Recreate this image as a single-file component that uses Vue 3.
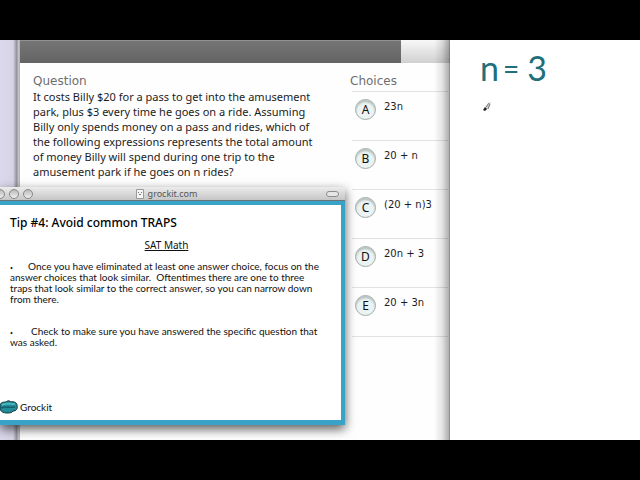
<script setup>
const choices = [
  { letter: 'A', text: '23n' },
  { letter: 'B', text: '20 + n' },
  { letter: 'C', text: '(20 + n)3' },
  { letter: 'D', text: '20n + 3' },
  { letter: 'E', text: '20 + 3n' },
]
</script>

<template>
  <div class="screen">
    <main class="stage">
      <section class="quiz">
        <div class="toolbar"><div class="toolbar-fill"></div></div>
        <div class="columns">
          <article class="question">
            <h2>Question</h2>
            <p>
              It costs Billy $20 for a pass to get into the amusement<br />
              park, plus $3 every time he goes on a ride. Assuming<br />
              Billy only spends money on a pass and rides, which of<br />
              the following expressions represents the total amount<br />
              of money Billy will spend during one trip to the<br />
              amusement park if he goes on n rides?
            </p>
          </article>
          <div class="choices">
            <h2>Choices</h2>
            <ul>
              <li v-for="c in choices" :key="c.letter">
                <button :id="'choice-' + c.letter" type="button">{{ c.letter }}</button>
                <label :for="'choice-' + c.letter">{{ c.text }}</label>
              </li>
            </ul>
          </div>
        </div>
      </section>

      <section class="board">
        <p class="ink"><span class="ink-n">n</span><span class="ink-eq">=</span><span class="ink-3">3</span></p>
        <svg class="pen" width="10" height="12" viewBox="0 0 10 12" aria-hidden="true">
          <path d="M3 7 L6 2 L9 1 L7 7 L4 9Z" fill="#d2d2cf" />
          <path d="M4 6 L7 2 M6 8 L8 3" stroke="#777" stroke-width="1" fill="none" />
          <path d="M1 9 L3 6 L5 8 L3 10Z" fill="#222" />
        </svg>
      </section>

      <section class="window">
        <header class="titlebar">
          <div class="lights">
            <button type="button" aria-label="Close"></button>
            <button type="button" aria-label="Minimize"></button>
            <button type="button" aria-label="Zoom"></button>
          </div>
          <div class="site">
            <svg width="8" height="10" viewBox="0 0 8 10" aria-hidden="true">
              <path d="M.5 .5 H7.500 V9.500 H.5Z" fill="#f4f4f4" stroke="#999" />
              <path d="M2 3.500 H3 M5 3.500 H6 M3 5.500 H5" stroke="#777" fill="none" />
            </svg>
            <span>grockit.com</span>
          </div>
          <button class="pill" type="button" aria-label="Toggle toolbar"></button>
        </header>
        <div class="slide">
          <h1>Tip #4: Avoid common TRAPS</h1>
          <h3>SAT Math</h3>
          <p>
            <span class="dot">•</span>Once you have eliminated at least one answer choice, focus on the<br />
            answer choices that look similar.&nbsp; Oftentimes there are one to three<br />
            traps that look similar to the correct answer, so you can narrow down<br />
            from there.
          </p>
          <p>
            <span class="dot wide">•</span>Check to make sure you have answered the specific question that<br />
            was asked.
          </p>
          <footer class="brand">
            <svg width="18" height="14" viewBox="0 0 18 14" aria-hidden="true">
              <path d="M0 5 C1 2 4 2 6 2 C8 0 10 1 11 2 C14 1 17 3 17 5 C18 9 16 11 13 11 C12 13 9 13 7 13 C4 13 1 12 0 9Z" fill="#218d99" stroke="#12333c" stroke-width="1" />
              <path d="M2 5 C6 3 11 4 15 4" stroke="#4fc0c4" stroke-width="1.500" fill="none" />
              <path d="M1 8 C5 6 8 8 15 7" stroke="#14606d" stroke-width="1.500" fill="none" />
            </svg>
            <span>Grockit</span>
          </footer>
        </div>
      </section>
    </main>
  </div>
</template>

<style>
body {
  margin: 0;
  background: #000;
}
</style>

<style scoped>
.screen {
  box-sizing: border-box;
  min-height: 100vh;
  padding: 40px 0;
  display: flex;
  flex-direction: column;
  background: #000;
  font-family: "Noto Sans", "Open Sans", sans-serif;
}
h1, h2, h3, p, ul {
  margin: 0;
  padding: 0;
  font-weight: 400;
}
button {
  padding: 0;
  font: inherit;
}
.stage {
  position: relative;
  flex: 1;
  display: grid;
  grid-template-columns: 450fr 190fr;
  overflow: hidden;
}
.quiz {
  position: relative;
  padding-left: 20px;
  background: linear-gradient(90deg, #dcd8ec 0, #d8d4e6 13px, #8e8c96 17px, #c4c4c4 18px, #b4b4b4 20px, #fefefe 20px);
}
.quiz::after {
  content: "";
  position: absolute;
  inset: 0 0 0 auto;
  width: 16px;
  background: linear-gradient(90deg, rgba(0, 0, 0, 0), rgba(0, 0, 0, 0.1) 50%, rgba(0, 0, 0, 0.32) 94%, rgba(0, 0, 0, 0.55));
}
.toolbar {
  height: 23px;
  background: linear-gradient(#f8f8f8, #d0d0d0);
}
.toolbar-fill {
  box-sizing: border-box;
  height: 100%;
  margin-right: 49px;
  background: linear-gradient(#757575, #646464);
  border-top: 1px solid #929292;
}
.columns {
  display: grid;
  grid-template-columns: 317fr 100fr;
  padding: 10px 0 0 13px;
}
h2 {
  font-family: "DejaVu Sans", sans-serif;
  font-size: 12px;
  line-height: 16px;
  color: #6e6e6e;
}
.question p {
  font-size: 11px;
  line-height: 15px;
  color: #1c1c1c;
  white-space: nowrap;
}
.choices ul {
  list-style: none;
  margin: 2px 2px 0;
}
.choices li {
  box-sizing: border-box;
  height: 49px;
  padding: 7px 0 0 3px;
  display: flex;
  gap: 8px;
  border-top: 1px solid #e2e2e2;
}
.choices li:last-child {
  height: 50px;
  border-bottom: 1px solid #e2e2e2;
}
.choices button {
  box-sizing: border-box;
  width: 21px;
  height: 21px;
  border: 1px solid #a3abab;
  border-radius: 50%;
  background: #ebf4f3;
  box-shadow: inset 0 2px 2px #b5bebd;
  font-size: 12px;
  line-height: 19px;
  color: #111;
}
.choices label {
  font-family: "DejaVu Sans", sans-serif;
  font-size: 10px;
  line-height: 16px;
  color: #1c1c1c;
  white-space: nowrap;
}
.board {
  padding: 10px 0 0 30px;
  background: #fff;
}
.ink {
  display: flex;
  align-items: center;
  gap: 4px;
  font-family: Lato, sans-serif;
  line-height: 36px;
  color: #216f7a;
}
.ink-n {
  font-size: 34px;
}
.ink-eq {
  font-size: 28px;
}
.ink-3 {
  padding-left: 4px;
  font-size: 34px;
}
.pen {
  display: block;
  margin: 15px 0 0 2px;
}
.window {
  position: absolute;
  left: 0;
  top: 147px;
  width: 345px;
  box-shadow: 0 4px 10px rgba(0, 0, 0, 0.65);
}
.titlebar {
  box-sizing: border-box;
  height: 14px;
  padding: 0 6px 0 0;
  display: grid;
  grid-template-columns: 1fr auto 1fr;
  align-items: center;
  background: linear-gradient(#ececec, #c6c6c6);
  border-bottom: 1px solid #6a7378;
}
.lights {
  display: flex;
  gap: 4px;
  margin-left: -5px;
}
.lights button {
  box-sizing: border-box;
  width: 10px;
  height: 10px;
  border: 1px solid #898989;
  border-radius: 50%;
  background: linear-gradient(#bababa, #efefef);
}
.site {
  display: flex;
  align-items: center;
  gap: 4px;
  margin-right: 6px;
  font-size: 9px;
  line-height: 12px;
  color: #555;
}
.pill {
  box-sizing: border-box;
  justify-self: end;
  width: 13px;
  height: 6px;
  border: 1px solid #8d8d8d;
  border-radius: 3px;
  background: #e6e6e6;
}
.slide {
  border: solid #38a3c6;
  border-width: 4px 4px 5px 0;
  background: #fff;
  padding: 9px 18px 3px 10px;
  color: #111;
}
h1 {
  font-size: 12px;
  font-weight: 500;
  line-height: 18px;
  color: #000;
}
h3 {
  padding: 7px 0 10px;
  font-size: 10px;
  line-height: 12px;
  text-align: center;
  text-decoration: underline;
}
.slide p {
  font-family: Lato, sans-serif;
  font-size: 10px;
  line-height: 11px;
  white-space: nowrap;
}
.slide p + p {
  margin-top: 21px;
}
.dot {
  display: inline-block;
  width: 18px;
  font-size: 5px;
  line-height: 5px;
}
.dot.wide {
  width: 21px;
}
.brand {
  display: flex;
  align-items: center;
  gap: 2px;
  margin: 51px 0 2px -10px;
  font-family: Lato, sans-serif;
  font-size: 10px;
  line-height: 16px;
}
</style>
